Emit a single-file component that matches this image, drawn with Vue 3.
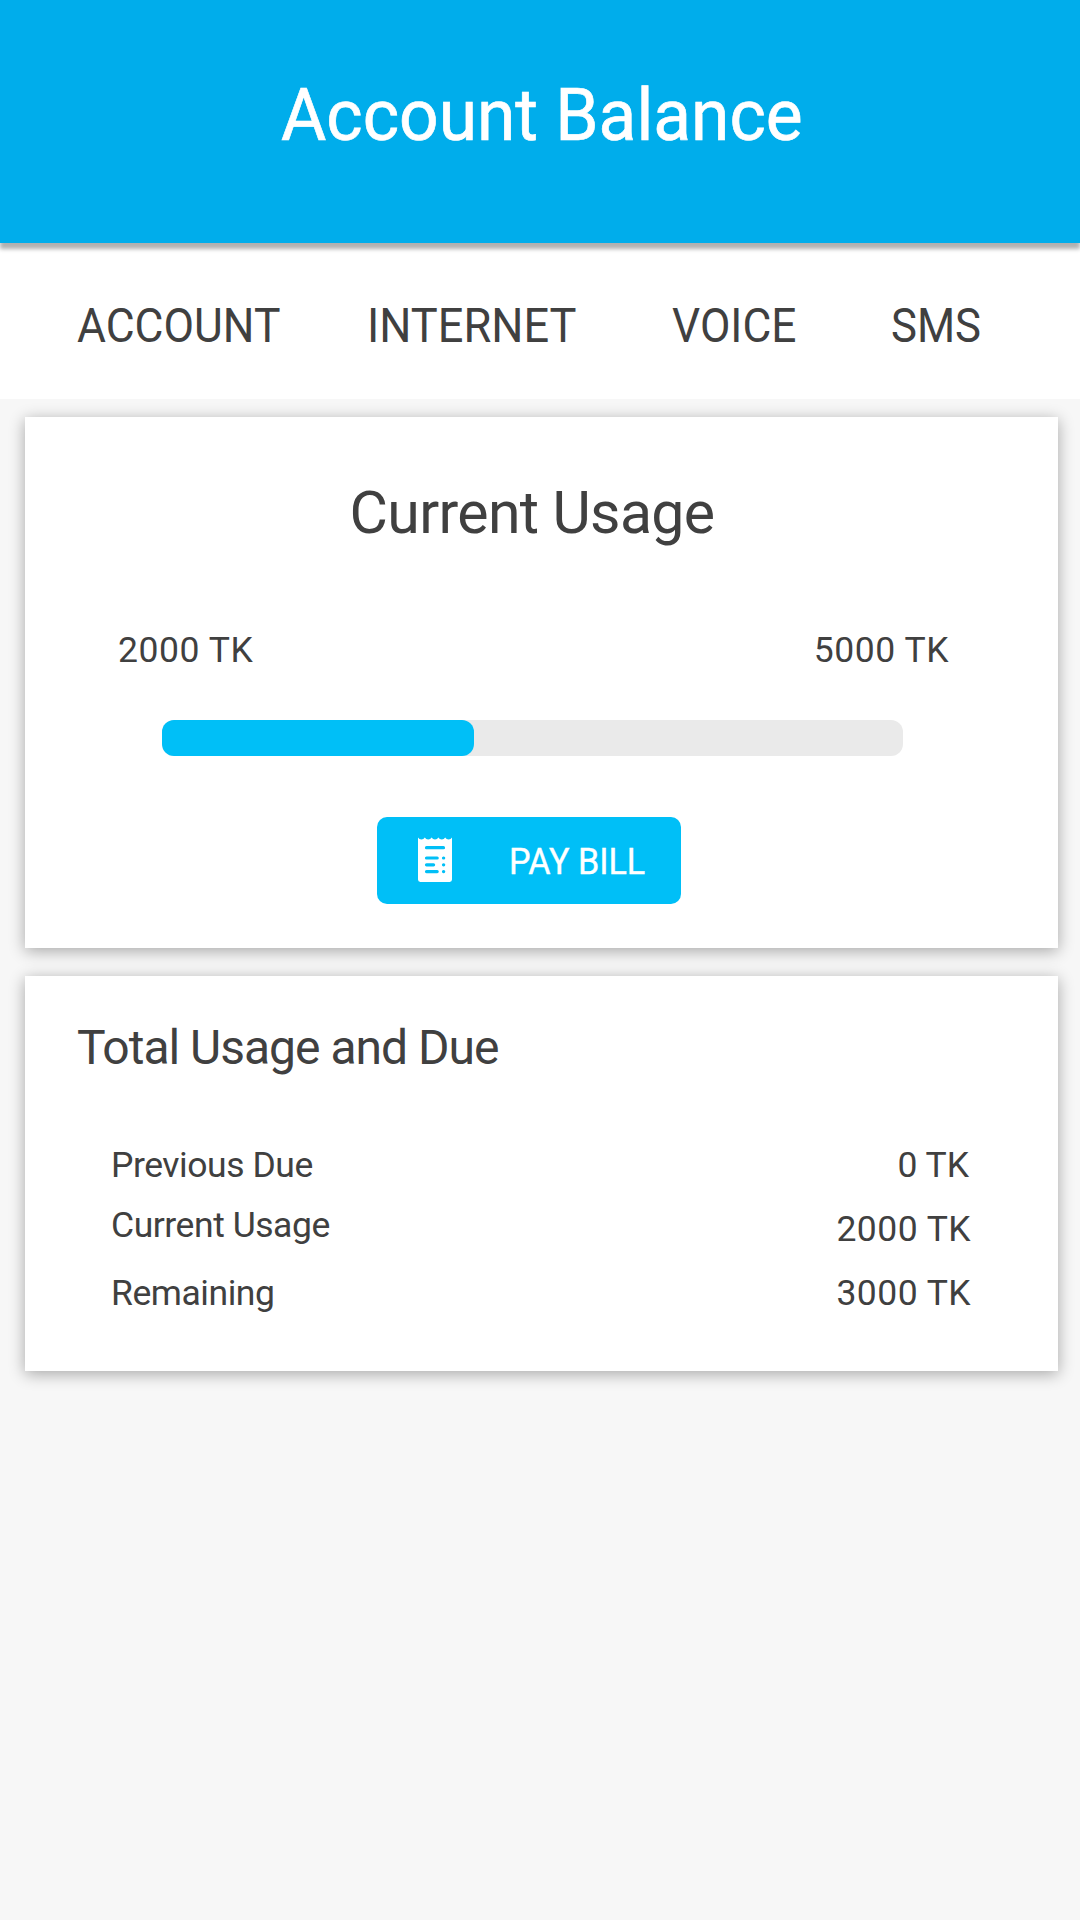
<script setup>
const tabs = [
  { key: 'account', label: 'ACCOUNT' },
  { key: 'internet', label: 'INTERNET' },
  { key: 'voice', label: 'VOICE' },
  { key: 'sms', label: 'SMS' },
]

const used = 2000
const limit = 5000
const fillWidth = 42.1
</script>

<template>
  <div class="screen">
    <header class="header">
      <h1 class="title">Account Balance</h1>
    </header>

    <nav class="tabs">
      <a v-for="tab in tabs" :key="tab.key" class="tab" :class="tab.key">{{ tab.label }}</a>
    </nav>

    <main class="content">
      <section class="card usage">
        <h2 class="usage-title">Current Usage</h2>
        <div class="limits">
          <span>{{ used }} TK</span>
          <span>{{ limit }} TK</span>
        </div>
        <div class="bar">
          <div class="fill" :style="{ width: fillWidth + '%' }"></div>
        </div>
        <button class="pay">
          <svg class="bill" viewBox="0 0 34 45" width="34" height="45">
            <path
              fill="#fff"
              d="M0 .5 Q1.2 2.4 3.4 2.4 Q5.6 2.4 6.8 .5 Q8 2.4 10.2 2.4 Q12.4 2.4 13.6 .5 Q14.8 2.4 17 2.4 Q19.2 2.4 20.4 .5 Q21.6 2.4 23.8 2.4 Q26 2.4 27.2 .5 Q28.4 2.4 30.6 2.4 Q32.8 2.4 34 .5 V42.6 Q34 45 31.6 45 H2.4 Q0 45 0 42.6 Z"
            />
            <g stroke="#00bff7" stroke-width="3.2" stroke-linecap="round">
              <path d="M8.5 10.7H25.5M8.5 21H19.2M8.5 27.8H15.6M8.5 34.6H19.2" />
              <path d="M25.5 21H25.7M25.5 27.8H25.7M25.5 34.6H25.7" />
            </g>
          </svg>
          <span class="pay-label">PAY BILL</span>
        </button>
      </section>

      <section class="card totals">
        <h2 class="totals-title">Total Usage and Due</h2>
        <div class="summary">
          <div class="labels">
            <span class="previous">Previous Due</span>
            <span class="current">Current Usage</span>
            <span class="remaining">Remaining</span>
          </div>
          <div class="values">
            <span class="zero">0 TK</span>
            <span>2000 TK</span>
            <span>3000 TK</span>
          </div>
        </div>
      </section>
    </main>
  </div>
</template>

<style>
body {
  margin: 0;
  background: #f7f7f7;
}
</style>

<style scoped>
.screen {
  width: 1080px;
  height: 1920px;
  overflow: hidden;
  background: #f7f7f7;
  color: #404040;
  font-family: Roboto, "Liberation Sans", sans-serif;
}

h1,
h2 {
  margin: 0;
  font-weight: 400;
}

span,
a,
h1,
h2 {
  white-space: nowrap;
}

.header {
  position: relative;
  z-index: 1;
  box-sizing: border-box;
  height: 243px;
  padding: 80px 0 0 281px;
  background: #00adeb;
  box-shadow: 0 6px 4px rgba(0, 0, 0, 0.31);
}

.title {
  width: max-content;
  color: #fff;
  font-size: 72px;
  line-height: 72px;
  transform: scaleX(0.965);
  transform-origin: left;
  -webkit-text-stroke: 0.7px #fff;
}

.tabs {
  box-sizing: border-box;
  display: grid;
  grid-template-columns: 289.5px 305px 219.5px auto;
  height: 156px;
  padding: 59px 0 0 77px;
  background: #fff;
}

.tab {
  width: max-content;
  height: 48px;
  font-size: 48px;
  line-height: 48px;
  transform-origin: left;
}

.account {
  transform: scaleX(0.925);
}

.internet {
  transform: scaleX(0.94);
}

.voice {
  transform: scaleX(0.922);
}

.sms {
  transform: scaleX(0.91);
}

.content {
  display: flex;
  flex-direction: column;
  gap: 28px;
  padding: 18px 22px 0 25px;
}

.card {
  box-sizing: border-box;
  background: #fff;
  box-shadow: 0 3px 15px rgba(0, 0, 0, 0.33);
}

.usage {
  display: flex;
  flex-direction: column;
  height: 531px;
}

.usage-title {
  margin: 66px 0 0 324.5px;
  font-size: 59px;
  line-height: 60px;
  letter-spacing: -0.65px;
}

.limits {
  display: flex;
  justify-content: space-between;
  margin: 89px 109px 0 93px;
  font-size: 35.5px;
  line-height: 36px;
  letter-spacing: 0.55px;
}

.bar {
  width: 741px;
  height: 36px;
  margin: 52px 0 0 137px;
  border-radius: 12px;
  background: #eaeaea;
}

.fill {
  height: 100%;
  border-radius: 12px;
  background: #00bff7;
}

.pay {
  box-sizing: border-box;
  display: flex;
  width: 304px;
  height: 87px;
  margin: 61px 0 0 352px;
  padding: 20px 0 0 41px;
  border: 0;
  border-radius: 10px;
  background: #00bff7;
  color: #fff;
  font-family: inherit;
}

.pay-label {
  margin: 7px 0 0 56.5px;
  font-size: 36.5px;
  line-height: 36px;
  transform: scaleX(0.935);
  transform-origin: left;
  -webkit-text-stroke: 0.4px #fff;
}

.totals {
  height: 395px;
  padding: 48px 0 0 52px;
}

.totals-title {
  font-size: 48px;
  line-height: 48px;
  letter-spacing: -1px;
}

.summary {
  display: flex;
  justify-content: space-between;
  padding: 75px 87px 0 34px;
  font-size: 35.5px;
  line-height: 36px;
}

.labels,
.values {
  display: flex;
  flex-direction: column;
}

.labels {
  letter-spacing: -0.45px;
}

.current {
  margin-top: 24px;
}

.remaining {
  margin-top: 32px;
}

.values {
  align-items: flex-end;
  gap: 28px;
  letter-spacing: 0.45px;
}

.zero {
  margin-right: 2px;
  letter-spacing: 0;
}
</style>
